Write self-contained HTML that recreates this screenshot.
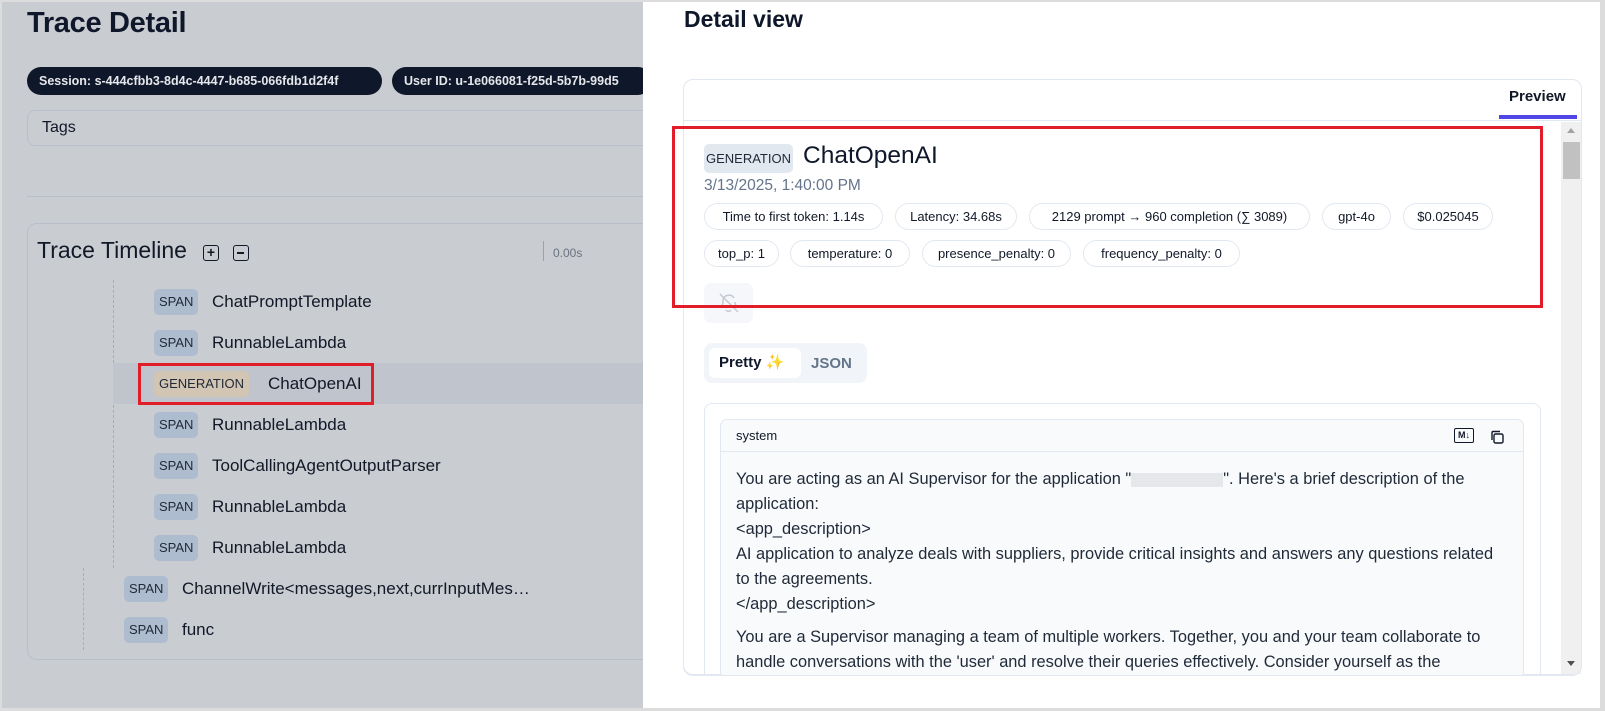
<!DOCTYPE html>
<html><head><meta charset="utf-8">
<style>
*{box-sizing:border-box;margin:0;padding:0}
body{width:1605px;height:711px;position:relative;overflow:hidden;background:#dcdcdc;font-family:"Liberation Sans",sans-serif;color:#111827}
.a{position:absolute}
#left{left:2px;top:2px;width:641px;height:706px;background:#c9ccd1;overflow:hidden}
#right{left:643px;top:2px;width:957px;height:706px;background:#fff}
.pill{position:absolute;height:28px;border-radius:14px;background:#0f172a;color:#e5e7eb;font-size:12.5px;font-weight:bold;line-height:28px;padding-left:12px;white-space:nowrap;overflow:hidden}
.badge{position:absolute;height:26px;border-radius:5px;background:#aebccf;font-size:13px;line-height:26px;padding:0 5px;color:#1f2937}
.rt{position:absolute;font-size:17px;color:#111827;white-space:nowrap}
.chip{position:absolute;height:27px;border:1px solid #e2e8f0;border-radius:14px;font-size:13px;line-height:25px;text-align:center;color:#111827;white-space:nowrap}
.txt{position:absolute;left:736px;font-size:16.4px;color:#1f2937;white-space:nowrap}
</style></head><body>
<div id="left" class="a"></div>
<div class="a" style="left:27px;top:7px;font-size:29px;font-weight:bold;color:#0f172a;letter-spacing:-0.3px">Trace Detail</div>
<div class="pill" style="left:27px;top:67px;width:355px">Session: s-444cfbb3-8d4c-4447-b685-066fdb1d2f4f</div>
<div class="pill" style="left:392px;top:67px;width:260px">User ID: u-1e066081-f25d-5b7b-99d5</div>
<div class="a" style="left:27px;top:110px;width:640px;height:36px;border:1px solid #b9bfc9;border-radius:8px"></div>
<div class="a" style="left:42px;top:119px;font-size:16px;color:#111827">Tags</div>
<div class="a" style="left:27px;top:196px;width:620px;height:1px;background:#b9bfc9"></div>
<div class="a" style="left:27px;top:223px;width:640px;height:437px;border:1px solid #b9bfc9;border-radius:10px"></div>
<div class="a" style="left:37px;top:237px;font-size:23px;color:#111827">Trace Timeline</div>
<div class="a" style="left:203px;top:245px;width:16px;height:16px;border:1.5px solid #111827;border-radius:3px;font-size:14px;line-height:12px;text-align:center;font-weight:bold">+</div>
<div class="a" style="left:233px;top:245px;width:16px;height:16px;border:1.5px solid #111827;border-radius:3px"><div class="a" style="left:3px;top:6px;width:7px;height:1.5px;background:#111827"></div></div>
<div class="a" style="left:543px;top:241px;width:1px;height:20px;background:#9ca3af"></div>
<div class="a" style="left:553px;top:246px;font-size:12px;color:#6b7280">0.00s</div>
<div class="a" style="left:113px;top:280px;height:288px;border-left:1px dashed #a8aeb8"></div>
<div class="a" style="left:83px;top:568px;height:82px;border-left:1px dashed #a8aeb8"></div>
<div class="a" style="left:113px;top:363px;width:530px;height:41px;background:#c0c5cd"></div>
<div class="badge" style="left:154px;top:289px">SPAN</div><div class="rt" style="left:212px;top:292px">ChatPromptTemplate</div>
<div class="badge" style="left:154px;top:330px">SPAN</div><div class="rt" style="left:212px;top:333px">RunnableLambda</div>
<div class="badge" style="left:154px;top:371px;background:#d2c5b3">GENERATION</div><div class="rt" style="left:268px;top:374px">ChatOpenAI</div>
<div class="a" style="left:138px;top:363px;width:236px;height:42px;border:3px solid #e11d2a"></div>
<div class="badge" style="left:154px;top:412px">SPAN</div><div class="rt" style="left:212px;top:415px">RunnableLambda</div>
<div class="badge" style="left:154px;top:453px">SPAN</div><div class="rt" style="left:212px;top:456px">ToolCallingAgentOutputParser</div>
<div class="badge" style="left:154px;top:494px">SPAN</div><div class="rt" style="left:212px;top:497px">RunnableLambda</div>
<div class="badge" style="left:154px;top:535px">SPAN</div><div class="rt" style="left:212px;top:538px">RunnableLambda</div>
<div class="badge" style="left:124px;top:576px">SPAN</div><div class="rt" style="left:182px;top:579px">ChannelWrite&lt;messages,next,currInputMes…</div>
<div class="badge" style="left:124px;top:617px">SPAN</div><div class="rt" style="left:182px;top:620px">func</div>

<div id="right" class="a"></div>
<div class="a" style="left:684px;top:6px;font-size:23px;font-weight:bold;color:#0f172a">Detail view</div>
<div class="a" style="left:683px;top:79px;width:899px;height:596px;border:1px solid #e2e8f0;border-radius:10px;overflow:hidden;background:#fff"></div>
<div class="a" style="left:684px;top:120px;width:897px;height:1px;background:#e2e8f0"></div>
<div class="a" style="left:1509px;top:88px;font-size:15px;font-weight:bold;color:#111827">Preview</div>
<div class="a" style="left:1499px;top:115px;width:78px;height:4px;background:#4f46e5"></div>
<div class="a" style="left:1561px;top:122px;width:20px;height:552px;background:#f0f0f0"></div>
<div class="a" style="left:1563px;top:142px;width:17px;height:37px;background:#c1c1c1"></div>
<div class="a" style="left:1567px;top:128px;width:0;height:0;border-left:4px solid transparent;border-right:4px solid transparent;border-bottom:5px solid #a3a3a3"></div>
<div class="a" style="left:1567px;top:661px;width:0;height:0;border-left:4px solid transparent;border-right:4px solid transparent;border-top:5px solid #505050"></div>

<div class="a" style="left:704px;top:144px;width:89px;height:29px;background:#e2e8f0;border-radius:5px;font-size:13px;line-height:29px;text-align:center;color:#1f2937">GENERATION</div>
<div class="a" style="left:803px;top:142px;font-size:24.5px;color:#0f172a">ChatOpenAI</div>
<div class="a" style="left:704px;top:177px;font-size:15.5px;color:#64748b">3/13/2025, 1:40:00 PM</div>
<div class="chip" style="left:704px;top:203px;width:179px">Time to first token: 1.14s</div>
<div class="chip" style="left:895px;top:203px;width:122px">Latency: 34.68s</div>
<div class="chip" style="left:1029px;top:203px;width:281px">2129 prompt → 960 completion (∑ 3089)</div>
<div class="chip" style="left:1322px;top:203px;width:69px">gpt-4o</div>
<div class="chip" style="left:1403px;top:203px;width:90px">$0.025045</div>
<div class="chip" style="left:704px;top:240px;width:75px">top_p: 1</div>
<div class="chip" style="left:790px;top:240px;width:120px">temperature: 0</div>
<div class="chip" style="left:922px;top:240px;width:149px">presence_penalty: 0</div>
<div class="chip" style="left:1083px;top:240px;width:157px">frequency_penalty: 0</div>
<div class="a" style="left:704px;top:283px;width:49px;height:40px;background:#f5f7fa;border-radius:7px">
<svg width="49" height="40" viewBox="0 0 49 40"><g fill="none" stroke="#c4cad3" stroke-width="1.5"><path d="M17 24c2-2 2-4 2-7a6 6 0 0 1 11-2M31 19c0 2 1 4 2 5H17M22 27a3 3 0 0 0 5 0M16 11l18 18"/></g></svg></div>
<div class="a" style="left:672px;top:126px;width:871px;height:182px;border:3px solid #e11d2a"></div>

<div class="a" style="left:704px;top:343px;width:163px;height:40px;background:#f1f5f9;border-radius:8px"></div>
<div class="a" style="left:709px;top:348px;width:92px;height:30px;background:#fff;border-radius:6px;font-size:15px;font-weight:bold;line-height:30px;padding-left:10px;color:#0f172a">Pretty <span style="color:#f5b800">✨</span></div>
<div class="a" style="left:811px;top:355px;font-size:15px;font-weight:bold;color:#64748b">JSON</div>

<div class="a" style="left:704px;top:403px;width:837px;height:280px;border:1px solid #e2e8f0;border-radius:8px"></div>
<div class="a" style="left:720px;top:419px;width:804px;height:260px;border:1px solid #e2e8f0;border-radius:7px;background:#f8fafc"></div>
<div class="a" style="left:721px;top:451px;width:802px;height:1px;background:#e2e8f0"></div>
<div class="a" style="left:736px;top:428px;font-size:13px;color:#111827">system</div>
<div class="a" style="left:1454px;top:428px;width:20px;height:15px;border:1.5px solid #111827;border-radius:2px;font-size:9px;font-weight:bold;line-height:12px;text-align:center">M↓</div>
<div class="a" style="left:1490px;top:430px"><svg width="14" height="14" viewBox="0 0 14 14" fill="none" stroke="#111827" stroke-width="1.4"><rect x="4" y="4" width="9" height="9" rx="1.5"/><path d="M2 10V2.5A1 1 0 0 1 3 1.5h7"/></svg></div>
<div class="txt" style="top:470px">You are acting as an AI Supervisor for the application "<span style="display:inline-block;width:92px;height:14px;background:#e5e7eb;vertical-align:middle"></span>". Here's a brief description of the</div>
<div class="txt" style="top:495px">application:</div>
<div class="txt" style="top:520px">&lt;app_description&gt;</div>
<div class="txt" style="top:545px">AI application to analyze deals with suppliers, provide critical insights and answers any questions related</div>
<div class="txt" style="top:570px">to the agreements.</div>
<div class="txt" style="top:595px">&lt;/app_description&gt;</div>
<div class="txt" style="top:628px">You are a Supervisor managing a team of multiple workers. Together, you and your team collaborate to</div>
<div class="txt" style="top:653px;height:21px;overflow:hidden">handle conversations with the 'user' and resolve their queries effectively. Consider yourself as the</div>
<div class="a" style="left:683px;top:675px;width:899px;height:33px;background:#fff"></div>
<div class="a" style="left:683px;top:665px;width:899px;height:11px;border:1px solid #e2e8f0;border-top:none;border-radius:0 0 10px 10px;background:transparent"></div>
</body></html>
